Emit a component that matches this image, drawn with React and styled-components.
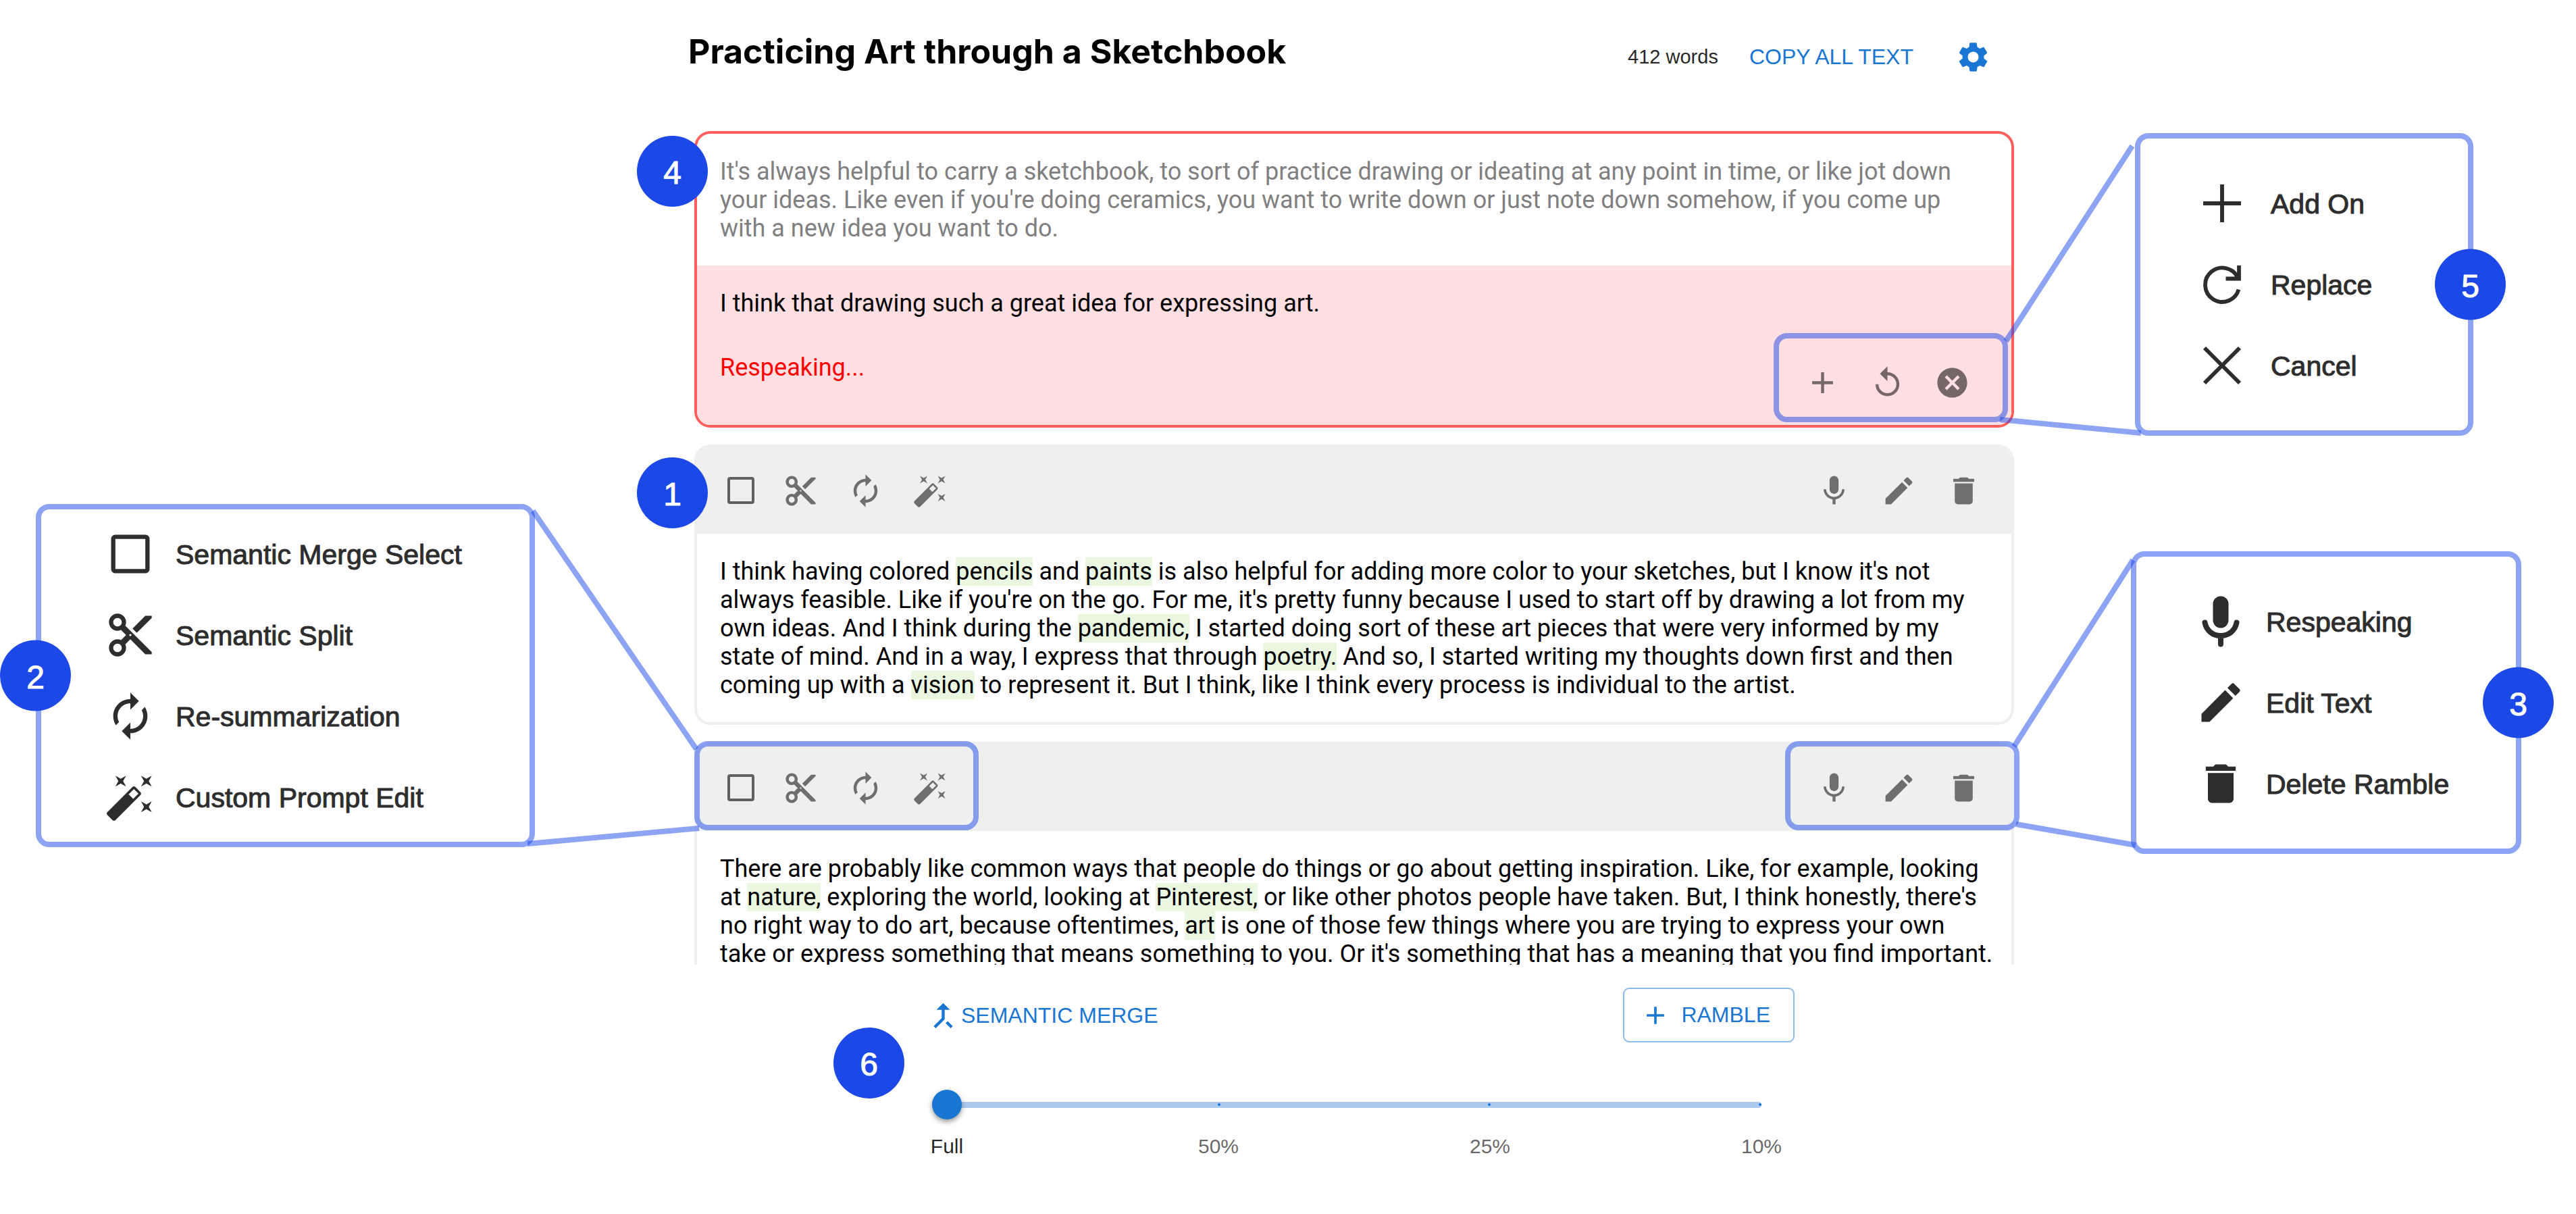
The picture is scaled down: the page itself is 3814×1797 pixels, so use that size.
import React, { Fragment, useState } from "react";
import styled, { createGlobalStyle } from "styled-components";
import {
  MdAdd,
  MdAutoFixHigh,
  MdAutorenew,
  MdCallMerge,
  MdCancel,
  MdContentCut,
  MdDelete,
  MdEdit,
  MdReplay,
  MdSettings,
} from "react-icons/md";

const uiFont = '"Liberation Sans", Arial, sans-serif';
const titleFont = 'Inter, Roboto, sans-serif';
const textFont = 'Roboto, Inter, sans-serif';
const blue = "#1976d2";
const badgeBlue = "#1c48e8";
const outline = "rgba(28, 72, 232, 0.5)";

const GlobalStyle = createGlobalStyle`
  *, *::before, *::after { box-sizing: border-box; }
  body { margin: 0; background: #fff; color: #000; font-family: ${textFont}; }
  h1, p, ul { margin: 0; padding: 0; }
  button { font: inherit; border: 0; background: none; padding: 0; cursor: pointer; }
`;

const Page = styled.div`
  position: relative;
  display: grid;
  grid-template-columns: 928fr 2068fr 818fr;
  height: 100vh;
  overflow: hidden;
`;

const Side = styled.aside`
  display: flex;
  flex-direction: column;
  gap: 171px;
  padding-top: ${(p) => p.$top}px;
`;

const Editor = styled.main`
  display: flex;
  flex-direction: column;
  min-width: 0;
  height: 100vh;
`;

const Header = styled.header`
  flex: none;
  display: flex;
  align-items: flex-start;
  justify-content: space-between;
  height: 194px;
  padding: 40px 31px 0 91px;
`;

const Title = styled.h1`
  font-family: ${titleFont};
  font-size: 50px;
  font-weight: 700;
  line-height: 72px;
`;

const HeaderTools = styled.div`
  display: flex;
  align-items: center;
  font-family: ${uiFont};
`;

const WordCount = styled.span`
  margin-right: 30px;
  font-size: 29px;
  color: rgba(0, 0, 0, 0.87);
`;

const TextButton = styled.button`
  display: flex;
  align-items: center;
  padding: 0 ${(p) => p.$pad || 0}px;
  font-family: ${uiFont};
  font-size: 32px;
  color: ${blue};
`;

const CopyButton = styled(TextButton)`
  margin-right: 28px;
`;

const IconButton = styled.button`
  display: flex;
  align-items: center;
  justify-content: center;
  width: 88px;
  height: 88px;
  color: ${(p) => p.$color || "rgba(0, 0, 0, 0.54)"};
  svg { width: 53px; height: 53px; }
`;

const List = styled.div`
  flex: 1;
  min-height: 0;
  overflow: hidden;
  display: flex;
  flex-direction: column;
  gap: 25px;
  padding: 0 14px 0 100px;
`;

const Card = styled.article`
  position: relative;
  flex: none;
  border: 4px solid ${(p) => (p.$active ? "#ff5f5c" : "#efefef")};
  border-radius: 24px;
  background: #fff;
`;

const Toolbar = styled.div`
  position: relative;
  display: flex;
  align-items: center;
  justify-content: space-between;
  height: 128px;
  padding: 0 27px 0 21px;
  border-radius: 20px 20px 0 0;
  background: #efefef;
`;

const ToolGroup = styled.div`
  position: relative;
  display: flex;
  align-items: center;
  gap: 8px;
`;

const CheckCell = styled.label`
  display: flex;
  align-items: center;
  justify-content: center;
  width: 88px;
  height: 88px;
  margin-right: -8px;
`;

const Check = styled.input`
  appearance: none;
  width: 40px;
  height: 40px;
  margin: 0;
  border: 4px solid rgba(0, 0, 0, 0.6);
  border-radius: 4px;
  &:checked { background: ${blue}; }
`;

const Copy = styled.p`
  padding: 35px 36px 34px 34px;
  font-size: 36px;
  line-height: 42px;
  white-space: nowrap;
  color: ${(p) => (p.$muted ? "#808080" : "#000")};
`;

const Mark = styled.mark`
  background: #eaf8e2;
  color: inherit;
`;

const Respeak = styled.div`
  display: flex;
  align-items: flex-end;
  justify-content: space-between;
  height: 236px;
  padding: 35px 44px 19px 34px;
  border-radius: 0 0 20px 20px;
  background: #ffdfe1;
  font-size: 36px;
  line-height: 42px;
`;

const Transcript = styled.div`
  display: flex;
  flex-direction: column;
  gap: 53px;
  align-self: flex-start;
`;

const Status = styled.p`
  color: #f00;
`;

const Frame = styled.div`
  position: absolute;
  border: 8px solid ${outline};
  border-radius: 20px;
  pointer-events: none;
`;

const ActionsFrame = styled(Frame)`
  inset: -29px -39px -15px -28px;
`;

const LeftFrame = styled(Frame)`
  inset: -5px auto 1px -4px;
  width: 421px;
`;

const RightFrame = styled(Frame)`
  inset: -5px -12px 1px auto;
  width: 347px;
`;

const Badge = styled.span`
  position: absolute;
  z-index: 3;
  display: flex;
  align-items: center;
  justify-content: center;
  width: 105px;
  height: 105px;
  padding-top: 4px;
  border-radius: 50%;
  background: ${badgeBlue};
  color: #fff;
  font-family: ${uiFont};
  font-size: 48px;
  -webkit-text-stroke: 1px currentColor;
`;

const CardBadge = styled(Badge)`
  left: -89px;
  top: ${(p) => p.$top}px;
`;

const CalloutBadge = styled(Badge)`
  top: 50%;
  transform: translateY(-50%);
  ${(p) => (p.$side === "left" ? "left: -61px;" : "right: -56px;")}
`;

const FooterBadge = styled(Badge)`
  left: 306px;
  top: 93px;
`;

const Callout = styled.section`
  position: relative;
  margin: 0 ${(p) => p.$right}px 0 ${(p) => p.$left}px;
  padding: ${(p) => p.$pad};
  border: 8px solid ${outline};
  border-radius: 20px;
`;

const CalloutList = styled.ul`
  list-style: none;
`;

const CalloutItem = styled.li`
  display: flex;
  align-items: center;
  gap: ${(p) => p.$gap}px;
  height: 120px;
  font-family: ${uiFont};
  font-size: 41px;
  color: #2d2d2d;
  white-space: nowrap;
  -webkit-text-stroke: 1px currentColor;
  svg { width: 76px; height: 76px; flex: none; -webkit-text-stroke: 0; }
`;

const CalloutLabel = styled.span`
  padding-top: 2px;
`;

const Connectors = styled.svg`
  position: absolute;
  inset: 0;
  z-index: 2;
  width: 100%;
  height: 100%;
  pointer-events: none;
`;

const Footer = styled.footer`
  position: relative;
  flex: none;
  height: 369px;
  padding: 34px 339px 0 442px;
  font-family: ${uiFont};
`;

const FooterRow = styled.div`
  display: flex;
  align-items: center;
  justify-content: space-between;
`;

const MergeButton = styled(TextButton)`
  padding-top: 2px;
  svg { width: 53px; height: 53px; }
`;

const RambleButton = styled(TextButton)`
  gap: 16px;
  height: 81px;
  padding: 0 34px 0 24px;
  border: 2px solid rgba(25, 118, 210, 0.5);
  border-radius: 9px;
  svg { width: 44px; height: 44px; }
`;

const SliderBox = styled.div`
  margin: 70px 49px 0 32px;
`;

const Rail = styled.div`
  position: relative;
  display: flex;
  align-items: center;
  justify-content: space-between;
  height: 44px;
  &::before {
    content: "";
    position: absolute;
    inset: 18px 0 17px;
    border-radius: 5px;
    background: #adcaee;
  }
`;

const Tick = styled.span`
  position: relative;
  width: 4px;
  height: 4px;
  border-radius: 2px;
  background: ${blue};
`;

const Range = styled.input`
  appearance: none;
  position: absolute;
  left: -22px;
  width: calc(100% + 44px);
  height: 44px;
  margin: 0;
  background: transparent;
  &::-webkit-slider-thumb {
    appearance: none;
    width: 44px;
    height: 44px;
    border-radius: 50%;
    background: ${blue};
    box-shadow: 0 4px 6px rgba(0, 0, 0, 0.3), 0 2px 12px rgba(0, 0, 0, 0.12);
  }
`;

const Stops = styled.div`
  display: flex;
  justify-content: space-between;
  margin-top: 20px;
`;

const Stop = styled.span`
  display: flex;
  justify-content: center;
  width: 0;
  font-size: 30px;
  line-height: 40px;
  color: ${(p) => (p.$on ? "rgba(0, 0, 0, 0.87)" : "rgba(0, 0, 0, 0.6)")};
`;

const MicIcon = () => (
  <svg viewBox="0 0 24 24" fill="currentColor" aria-hidden="true">
    <path d="M12 14c1.66 0 2.99-1.34 2.99-3L15 5c0-1.66-1.34-3-3-3S9 3.34 9 5v6c0 1.66 1.34 3 3 3zm5.3-3c0 3-2.54 5.1-5.3 5.1S6.7 14 6.7 11H5c0 3.41 2.72 6.23 6 6.72V21h2v-3.28c3.28-.48 6-3.3 6-6.72h-1.7z" />
  </svg>
);

const RoundMicIcon = () => (
  <svg viewBox="0 0 76 76" fill="none" stroke="currentColor" strokeWidth="8" strokeLinecap="round" aria-hidden="true">
    <rect x="26.5" y="0.5" width="23" height="47" rx="11.5" fill="currentColor" stroke="none" />
    <path d="M14.5 39.5C16.5 51 26 59 38 59s21.500-8 23.500-19.500M38 60v11.500" />
  </svg>
);

const SquareIcon = () => (
  <svg viewBox="0 0 24 24" fill="currentColor" aria-hidden="true">
    <path d="M19 5v14H5V5h14m0-2H5c-1.100 0-2 .9-2 2v14c0 1.100.9 2 2 2h14c1.100 0 2-.9 2-2V5c0-1.100-.9-2-2-2z" />
  </svg>
);

const LineIcon = ({ d }) => (
  <svg viewBox="0 0 76 76" fill="none" stroke="currentColor" strokeWidth="5.800" aria-hidden="true">
    <path d={d} />
  </svg>
);

const mergeItems = [
  [<SquareIcon />, "Semantic Merge Select"],
  [<MdContentCut />, "Semantic Split"],
  [<MdAutorenew />, "Re-summarization"],
  [<MdAutoFixHigh />, "Custom Prompt Edit"],
];

const respeakItems = [
  [<LineIcon d="M38 10v56M10 38h56" />, "Add On"],
  [<LineIcon d="M63 10v19.500H43.500M61.500 29A25.200 25.200 0 1 0 62.500 45.500" />, "Replace"],
  [<LineIcon d="M12 12l52 52M64 12L12 64" />, "Cancel"],
];

const editItems = [
  [<RoundMicIcon />, "Respeaking"],
  [<MdEdit />, "Edit Text"],
  [<MdDelete />, "Delete Ramble"],
];

const carryLines = [
  "It's always helpful to carry a sketchbook, to sort of practice drawing or ideating at any point in time, or like jot down",
  "your ideas. Like even if you're doing ceramics, you want to write down or just note down somehow, if you come up",
  "with a new idea you want to do.",
];

const colorLines = [
  "I think having colored *pencils* and *paints* is also helpful for adding more color to your sketches, but I know it's not",
  "always feasible. Like if you're on the go. For me, it's pretty funny because I used to start off by drawing a lot from my",
  "own ideas. And I think during the *pandemic,* I started doing sort of these art pieces that were very informed by my",
  "state of mind. And in a way, I express that through *poetry.* And so, I started writing my thoughts down first and then",
  "coming up with a *vision* to represent it. But I think, like I think every process is individual to the artist.",
];

const inspirationLines = [
  "There are probably like common ways that people do things or go about getting inspiration. Like, for example, looking",
  "at *nature,* exploring the world, looking at *Pinterest,* or like other photos people have taken. But, I think honestly, there's",
  "no right way to do art, because oftentimes, *art* is one of those few things where you are trying to express your own",
  "take or express something that means something to you. Or it's something that has a meaning that you find important.",
];

// Words between asterisks are keywords and get a highlight.
function Lines({ lines }) {
  return lines.map((line, i) => (
    <Fragment key={i}>
      {i > 0 && <br />}
      {line.split("*").map((part, j) => (j % 2 ? <Mark key={j}>{part}</Mark> : part))}
    </Fragment>
  ));
}

function RambleCard({ lines, badge, framed }) {
  return (
    <Card>
      <Toolbar>
        <ToolGroup>
          <CheckCell>
            <Check type="checkbox" aria-label="Select for semantic merge" />
          </CheckCell>
          <IconButton aria-label="Semantic split"><MdContentCut /></IconButton>
          <IconButton aria-label="Re-summarize"><MdAutorenew /></IconButton>
          <IconButton aria-label="Custom prompt edit"><MdAutoFixHigh /></IconButton>
        </ToolGroup>
        <ToolGroup>
          <IconButton aria-label="Respeak"><MicIcon /></IconButton>
          <IconButton aria-label="Edit text"><MdEdit /></IconButton>
          <IconButton aria-label="Delete ramble"><MdDelete /></IconButton>
        </ToolGroup>
        {framed && <LeftFrame />}
        {framed && <RightFrame />}
      </Toolbar>
      <Copy><Lines lines={lines} /></Copy>
      {badge && <CardBadge $top={15}>{badge}</CardBadge>}
    </Card>
  );
}

function CalloutPanel({ items, badge, side, left, right, pad, gap = 29 }) {
  return (
    <Callout $left={left} $right={right} $pad={pad}>
      <CalloutList>
        {items.map(([icon, label]) => (
          <CalloutItem key={label} $gap={gap}>
            {icon}
            <CalloutLabel>{label}</CalloutLabel>
          </CalloutItem>
        ))}
      </CalloutList>
      <CalloutBadge $side={side}>{badge}</CalloutBadge>
    </Callout>
  );
}

const stops = ["Full", "50%", "25%", "10%"];

export default function App() {
  const [level, setLevel] = useState(0);
  return (
    <>
      <GlobalStyle />
      <Page>
        <Side $top={746}>
          <CalloutPanel items={mergeItems} badge="2" side="left" left={53} right={136} pad="6px 0 6px 94px" />
        </Side>

        <Editor>
          <Header>
            <Title>Practicing Art through a Sketchbook</Title>
            <HeaderTools>
              <WordCount>412 words</WordCount>
              <CopyButton $pad={16}>COPY ALL TEXT</CopyButton>
              <IconButton $color={blue} aria-label="Settings"><MdSettings /></IconButton>
            </HeaderTools>
          </Header>

          <List>
            <Card $active>
              <Copy $muted><Lines lines={carryLines} /></Copy>
              <Respeak>
                <Transcript>
                  <p>I think that drawing such a great idea for expressing art.</p>
                  <Status>Respeaking...</Status>
                </Transcript>
                <ToolGroup>
                  <IconButton aria-label="Add on"><MdAdd /></IconButton>
                  <IconButton aria-label="Replace"><MdReplay /></IconButton>
                  <IconButton aria-label="Cancel"><MdCancel /></IconButton>
                  <ActionsFrame />
                </ToolGroup>
              </Respeak>
              <CardBadge $top={3}>4</CardBadge>
            </Card>
            <RambleCard lines={colorLines} badge="1" />
            <RambleCard lines={inspirationLines} framed />
          </List>

          <Footer>
            <FooterRow>
              <MergeButton><MdCallMerge />SEMANTIC MERGE</MergeButton>
              <RambleButton><MdAdd />RAMBLE</RambleButton>
            </FooterRow>
            <SliderBox>
              <Rail>
                {stops.map((s) => <Tick key={s} />)}
                <Range
                  type="range"
                  min="0"
                  max="3"
                  step="1"
                  value={level}
                  onChange={(e) => setLevel(Number(e.target.value))}
                  aria-label="Summary length"
                />
              </Rail>
              <Stops>
                {stops.map((s, i) => <Stop key={s} $on={i === level}>{s}</Stop>)}
              </Stops>
            </SliderBox>
            <FooterBadge>6</FooterBadge>
          </Footer>
        </Editor>

        <Side $top={197}>
          <CalloutPanel items={respeakItems} badge="5" side="right" left={165} right={152} pad="36px 0 36px 83px" gap={34} />
          <CalloutPanel items={editItems} badge="3" side="right" left={159} right={81} pad="36px 0 36px 87px" />
        </Side>

        <Connectors viewBox="0 0 3814 1797" preserveAspectRatio="none" fill="none" stroke={badgeBlue} strokeOpacity="0.5" strokeWidth="8" aria-hidden="true">
          <path d="M789 756L1031 1109" />
          <path d="M781 1249L1035 1226" />
          <path d="M2970 505L3157 216" />
          <path d="M2961 621L3170 641" />
          <path d="M2982 1105L3158 829" />
          <path d="M2985 1220L3162 1251" />
        </Connectors>
      </Page>
    </>
  );
}
